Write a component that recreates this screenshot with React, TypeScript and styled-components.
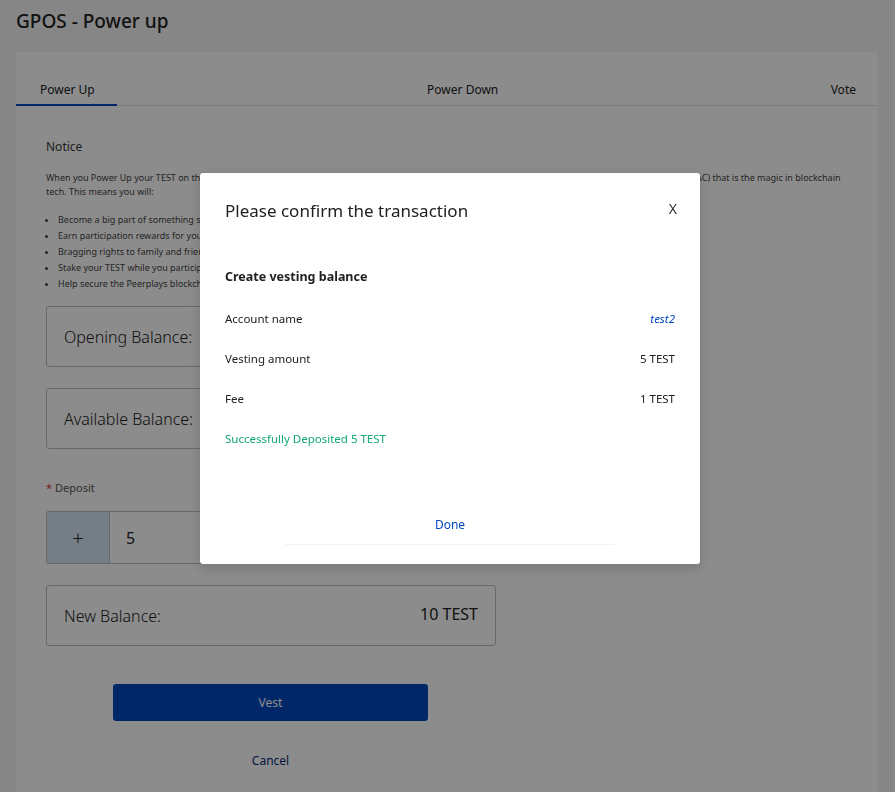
import { createGlobalStyle } from "styled-components";
import styled from "styled-components";

const FONT = `"Noto Sans", "Open Sans", sans-serif`;

const GlobalStyle = createGlobalStyle`
  html, body {
    margin: 0;
    padding: 0;
    background: #f5f5f5;
    font-family: ${FONT};
    color: #212121;
  }
`;

const Page = styled.div`
  padding: 0 17px 0 16px;
`;

const Title = styled.h1`
  margin: 0;
  padding: 8px 0 18px;
  font-size: 19px;
  font-weight: 500;
  line-height: 26px;
`;

const Card = styled.div`
  background: #fff;
  padding-top: 23px;
  min-height: 760px;
`;

const Tabs = styled.div`
  display: flex;
  justify-content: space-between;
  border-bottom: 1px solid #e3e3e3;
`;

const Tab = styled.div<{ $active?: boolean }>`
  font-size: 12px;
  padding: 6px 22px 6px 24px;
  border-bottom: 2px solid ${(p) => (p.$active ? "#0148be" : "transparent")};
  margin-bottom: -1px;
  color: #212121;
`;

const Body = styled.div`
  padding: 32px 30px 0;
  display: flex;
  flex-direction: column;
`;

const Notice = styled.div`
  font-size: 12px;
  color: #3a3a3a;
  margin-bottom: 16px;
`;

const Para = styled.p`
  margin: 0 0 13px;
  font-size: 9px;
  line-height: 14px;
  color: #444;
  max-width: 805px;
`;

const Bullets = styled.ul`
  margin: 0 0 14px;
  padding-left: 12px;
  font-size: 9px;
  line-height: 16px;
  color: #444;
`;

const BalanceBox = styled.div`
  width: 450px;
  box-sizing: border-box;
  height: 61px;
  border: 1px solid #bdbdbd;
  border-radius: 3px;
  display: flex;
  align-items: center;
  justify-content: space-between;
  padding: 0 17px;
  font-size: 16px;
  font-weight: 300;
  margin-bottom: 21px;
`;

const BalanceValue = styled.span`
  font-weight: 400;
  align-self: flex-start;
  margin-top: 17px;
`;

const Label = styled.div`
  font-size: 11px;
  color: #555;
  margin: 10px 0 16px;
`;

const Star = styled.span`
  color: #d9363e;
  margin-right: 3px;
`;

const InputGroup = styled.div`
  width: 450px;
  height: 53px;
  display: flex;
  border: 1px solid #bdbdbd;
  border-radius: 2px;
  box-sizing: border-box;
  margin-bottom: 21px;
`;

const PlusButton = styled.div`
  width: 62px;
  background: #d6e4f5;
  border-right: 1px solid #bdbdbd;
  display: flex;
  align-items: center;
  justify-content: center;
  font-size: 20px;
  font-weight: 300;
`;

const InputValue = styled.div`
  padding-left: 16px;
  display: flex;
  align-items: center;
  font-size: 16px;
`;

const VestButton = styled.div`
  width: 315px;
  height: 37px;
  margin: 17px 0 0 67px;
  background: #0148be;
  color: #fff;
  border-radius: 3px;
  display: flex;
  align-items: center;
  justify-content: center;
  font-size: 12px;
`;

const CancelLink = styled.div`
  width: 315px;
  margin-left: 67px;
  text-align: center;
  margin-top: 31px;
  font-size: 12px;
  color: #0a2a7a;
`;

const Overlay = styled.div`
  position: fixed;
  inset: 0;
  background: rgba(0, 0, 0, 0.45);
`;

const Modal = styled.div`
  position: fixed;
  left: 200px;
  top: 173px;
  width: 500px;
  height: 391px;
  background: #fff;
  border-radius: 3px;
  box-sizing: border-box;
  padding: 26px 25px 0;
  display: flex;
  flex-direction: column;
  box-shadow: 0 4px 12px rgba(0, 0, 0, 0.15);
`;

const ModalHeader = styled.div`
  display: flex;
  justify-content: space-between;
  align-items: center;
`;

const ModalTitle = styled.div`
  font-size: 17px;
  line-height: 24px;
`;

const Close = styled.div`
  font-size: 14px;
  margin: -6px -2px 0 0;
  color: #333;
`;

const Subtitle = styled.div`
  font-size: 12.5px;
  font-weight: 700;
  margin-top: 45px;
  margin-bottom: 26px;
`;

const Row = styled.div`
  display: flex;
  justify-content: space-between;
  font-size: 11.5px;
  line-height: 16px;
  height: 40px;
`;

const Account = styled.span`
  font-style: italic;
  color: #0148be;
`;

const Success = styled.div`
  font-size: 11.5px;
  line-height: 16px;
  color: #11a778;
`;

const Footer = styled.div`
  margin: auto 60px 19px;
  border-bottom: 1px solid #f2f2f2;
  padding-bottom: 11px;
  text-align: center;
  font-size: 12px;
  color: #0148be;
`;

const bullets = [
  "Become a big part of something special",
  "Earn participation rewards for your contribution",
  "Bragging rights to family and friends",
  "Stake your TEST while you participate in governance",
  "Help secure the Peerplays blockchain",
];

export default function App() {
  return (
    <>
      <GlobalStyle />
      <Page>
        <Title>GPOS - Power up</Title>
        <Card>
          <Tabs>
            <Tab $active>Power Up</Tab>
            <Tab>Power Down</Tab>
            <Tab>Vote</Tab>
          </Tabs>
          <Body>
            <Notice>Notice</Notice>
            <Para>
              When you Power Up your TEST on the Peerplays blockchain, you become an active participant and a
              part of the Decentralized Autonomous Cooperative (DAC) that is the magic in blockchain tech. This
              means you will:
            </Para>
            <Bullets>
              {bullets.map((b) => (
                <li key={b}>{b}</li>
              ))}
            </Bullets>
            <BalanceBox>
              <span>Opening Balance:</span>
              <BalanceValue>5 TEST</BalanceValue>
            </BalanceBox>
            <BalanceBox>
              <span>Available Balance:</span>
              <BalanceValue>100 TEST</BalanceValue>
            </BalanceBox>
            <Label>
              <Star>*</Star>Deposit
            </Label>
            <InputGroup>
              <PlusButton>+</PlusButton>
              <InputValue>5</InputValue>
            </InputGroup>
            <BalanceBox>
              <span>New Balance:</span>
              <BalanceValue>10 TEST</BalanceValue>
            </BalanceBox>
            <VestButton>Vest</VestButton>
            <CancelLink>Cancel</CancelLink>
          </Body>
        </Card>
      </Page>
      <Overlay />
      <Modal>
        <ModalHeader>
          <ModalTitle>Please confirm the transaction</ModalTitle>
          <Close>X</Close>
        </ModalHeader>
        <Subtitle>Create vesting balance</Subtitle>
        <Row>
          <span>Account name</span>
          <Account>test2</Account>
        </Row>
        <Row>
          <span>Vesting amount</span>
          <span>5 TEST</span>
        </Row>
        <Row>
          <span>Fee</span>
          <span>1 TEST</span>
        </Row>
        <Success>Successfully Deposited 5 TEST</Success>
        <Footer>Done</Footer>
      </Modal>
    </>
  );
}
